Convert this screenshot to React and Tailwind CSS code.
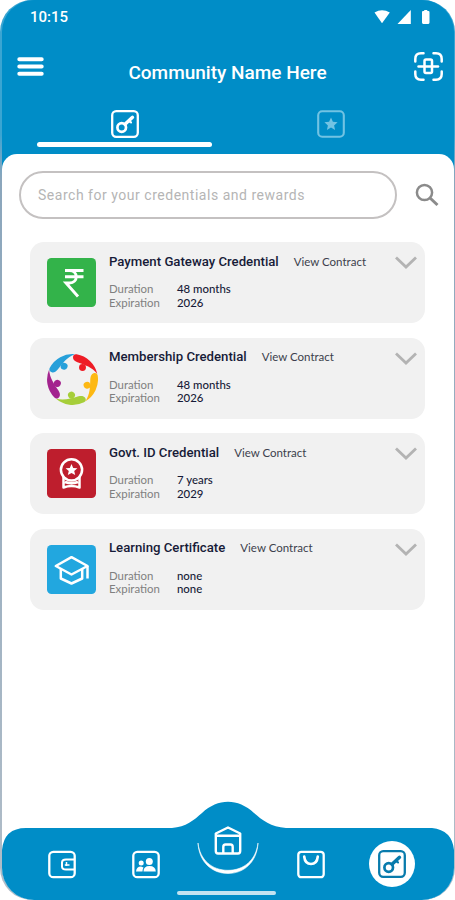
const credentials = [
  { title: 'Payment Gateway Credential', duration: '48 months', expiration: '2026', Icon: RupeeIcon },
  { title: 'Membership Credential', duration: '48 months', expiration: '2026', Icon: MembersIcon },
  { title: 'Govt. ID Credential', duration: '7 years', expiration: '2029', Icon: BadgeIcon },
  { title: 'Learning Certificate', duration: 'none', expiration: 'none', Icon: GraduationIcon },
];

function RupeeIcon() {
  return (
    <svg viewBox="0 0 49 49" className="w-[49px] h-[49px]">
      <rect width="49" height="49" rx="4.5" fill="#33b34a" />
      <path d="M18 12.500H36.500M18 18.700H36.500M18 12.500H22.500C31.500 12.500 31.500 25 22.500 25H19L31 38.500" fill="none" stroke="#fff" strokeWidth="2.9" />
    </svg>
  );
}

const memberColors = ['#ee1c25', '#fdb813', '#a6ce39', '#a3238e', '#27a0da'];

function MembersIcon() {
  return (
    <svg viewBox="0 0 50 50" className="w-[51px] h-[51px]">
      {memberColors.map((color, i) => (
        <g key={color} transform={`rotate(${i * 72} 25 25)`} fill={color}>
          <path d="M25.500 3.500C25.500 1 27 0 29 .3A25 25 0 0 1 49.300 19.500C44 13 37.500 11 29.800 8.200C27 7 25.500 5.500 25.500 3.500Z" />
          <circle cx="34.800" cy="13.200" r="3.400" />
        </g>
      ))}
    </svg>
  );
}

function BadgeIcon() {
  return (
    <svg viewBox="0 0 49 49" className="w-[49px] h-[49px]">
      <rect width="49" height="49" rx="4.5" fill="#be1e2d" />
      <g fill="none" stroke="#fff" strokeWidth="2.5" strokeLinejoin="round">
        <circle cx="24.500" cy="20.800" r="10.600" />
        <path d="M16.500 27.500V38.500Q24.500 35.500 32.500 38.500V27.500M18 33Q24.500 35.500 31 33" />
      </g>
      <path d="M24.500 15L26.200 18.900L30.400 19.200L27.200 22L28.200 26.100L24.500 23.900L20.800 26.100L21.800 22L18.600 19.200L22.800 18.900Z" fill="#fff" />
    </svg>
  );
}

function GraduationIcon() {
  return (
    <svg viewBox="0 0 49 49" className="w-[49px] h-[49px]">
      <rect width="49" height="49" rx="4.5" fill="#22a7df" />
      <g fill="none" stroke="#fff" strokeWidth="2.500" strokeLinejoin="round">
        <path d="M8.800 21L24.500 12.200L40.500 21L24.500 29.500Z" />
        <path d="M13.800 24V33.500L24.500 38.500L35.200 33.500V24M40.500 21V33.500" />
      </g>
    </svg>
  );
}

function KeyIcon() {
  return (
    <svg viewBox="0 0 28 28" className="w-7 h-7" fill="none" stroke="currentColor">
      <rect x="1.200" y="1.200" width="25.600" height="25.600" rx="4" strokeWidth="2.300" />
      <circle cx="10.700" cy="17.500" r="4.300" strokeWidth="2.700" />
      <path d="M14 14.300L21.500 7.300" strokeWidth="3.400" strokeLinecap="round" />
      <path d="M18 11L20 12.300" strokeWidth="2.200" strokeLinecap="round" />
    </svg>
  );
}

function StatusBar() {
  return (
    <div className="flex h-8 items-center justify-between pt-[2px] pl-[28px] pr-[24px]">
      <span className="text-[15px] leading-4 font-medium">10:15</span>
      <svg viewBox="0 0 56 14" className="w-14 h-[14px]" fill="#fff">
        <path d="M.5 2.500Q8-1.800 15.800 2.500L8 13.200Z" />
        <path d="M36.800 0V14H23.500Z" />
        <path d="M49 1H50.200V0H53.300V1H54.500Q55.500 1 55.500 2.200V12.600Q55.500 14 54.300 14H49.200Q48 14 48 12.600V2.200Q48 1 49 1Z" />
      </svg>
    </div>
  );
}

function Header() {
  return (
    <header className="flex h-[154px] flex-col text-white">
      <StatusBar />
      <div className="flex h-[70px] items-start justify-between pl-[15px] pr-[11px]">
        <svg viewBox="0 0 27 20" className="mt-[25px] w-[27px] h-5" stroke="#fff" strokeWidth="4" strokeLinecap="round">
          <path d="M2.300 2.300H24.700M2.300 9.500H24.700M2.300 16.700H24.700" />
        </svg>
        <h1 className="mt-[29px] mr-[3px] text-[19px] leading-6 font-medium whitespace-nowrap">Community Name Here</h1>
        <svg viewBox="0 0 29 29" className="mt-5 w-[29px] h-[29px]" fill="none" stroke="#fff" strokeWidth="2.500" strokeLinecap="round">
          <path d="M1.300 9.500V7Q1.300 1.300 7 1.300H9.500M19.500 1.300H22Q27.700 1.300 27.700 7V9.500M27.700 19.500V22Q27.700 27.700 22 27.700H19.500M9.500 27.700H7Q1.300 27.700 1.300 22V19.500" />
          <rect x="10.500" y="7.500" width="7.500" height="13.500" rx="1.500" />
          <path d="M4.500 14.500H24" />
        </svg>
      </div>
      <div className="flex gap-[31px] px-[35px] pt-2">
        <div className="flex w-[175px] flex-col items-center gap-[4px]">
          <KeyIcon />
          <div className="h-[5px] w-full rounded-full bg-white"></div>
        </div>
        <div className="flex w-[175px] justify-center text-[#72c3e3]">
          <svg viewBox="0 0 28 28" className="w-7 h-7">
            <rect x="1.200" y="1.200" width="25.600" height="25.600" rx="4" fill="none" stroke="currentColor" strokeWidth="2.100" />
            <path d="M14 7.500L15.900 11.800L20.600 12.300L17.100 15.400L18.100 20L14 17.600L9.900 20L10.900 15.400L7.400 12.300L12.100 11.800Z" fill="currentColor" />
          </svg>
        </div>
      </div>
    </header>
  );
}

function Search() {
  return (
    <div className="flex items-center gap-[18px] pt-[17px] pl-[17px]">
      <div className="flex h-[48px] w-[378px] items-center rounded-full border-2 border-[#c4c1c1] pl-[17px] text-[14px] tracking-[0.52px] whitespace-nowrap text-[#b5b5b5]">
        Search for your credentials and rewards
      </div>
      <svg viewBox="0 0 24 24" className="w-6 h-6" fill="none" stroke="#8b8b8b" strokeWidth="2.500">
        <circle cx="9.500" cy="9.500" r="7.600" />
        <path d="M15 15L22.500 22" strokeWidth="3" />
      </svg>
    </div>
  );
}

function CredentialCard({ title, duration, expiration, Icon }) {
  return (
    <li className="flex h-[81px] rounded-[14px] bg-[#f1f1f1] pr-[8px] pl-[17px]">
      <div className="flex w-[62px] shrink-0 pt-4">
        <Icon />
      </div>
      <div className="grow">
        <div className="flex h-[39px] items-center gap-[15px]">
          <h2 className="text-[13.2px] leading-5 font-medium whitespace-nowrap text-[#171b38]">{title}</h2>
          <a className="font-['Lato',sans-serif] text-[11.5px] leading-5 whitespace-nowrap text-[#3c3f4c]">View Contract</a>
        </div>
        <dl className="grid grid-cols-[68px_1fr] pt-[1px] font-['Lato',sans-serif] text-[11.4px] leading-[13.5px] text-[#808080]">
          <dt>Duration</dt>
          <dd className="font-medium text-[#171b38]">{duration}</dd>
          <dt>Expiration</dt>
          <dd className="font-medium text-[#171b38]">{expiration}</dd>
        </dl>
      </div>
      <svg viewBox="0 0 22 13" className="mt-[14px] h-[13px] w-[22px] shrink-0" fill="none" stroke="#b3b3b3" strokeWidth="2.800">
        <path d="M1 1.500L11 11L21 1.500" />
      </svg>
    </li>
  );
}

function BottomNav() {
  return (
    <nav className="relative flex h-[100px] shrink-0 text-white">
      <svg viewBox="0 0 452 100" className="absolute inset-0 h-full w-full">
        <path d="M0 100V50Q2 28 24 28H170C184 27 192 20 200 13C216-2 236-2 252 13C260 20 269 27 284 28H430Q450 30 452 50V100Z" fill="#008dc7" />
      </svg>
      <div className="relative grow">
        <div className="flex h-[90px] items-start pl-[46px]">
          <svg viewBox="0 0 28 28" className="mt-[50px] h-[29px] w-[28px]" fill="none" stroke="#fff" strokeWidth="2.300">
            <rect x="1.300" y="1.300" width="25.400" height="25.400" rx="4" />
            <path d="M26.500 9H18Q14 9 14 12V16Q14 19 18 19H26.500" strokeWidth="2" />
            <path d="M18.500 11.500V15.500M16.800 14.500H21.500" strokeWidth="1.500" />
          </svg>
          <svg viewBox="0 0 28 28" className="mt-[50px] ml-[56px] h-[29px] w-[28px]" fill="#fff">
            <rect x="1.300" y="1.300" width="25.400" height="25.400" rx="4" fill="none" stroke="#fff" strokeWidth="2.300" />
            <circle cx="9.200" cy="12.500" r="2.500" />
            <circle cx="17.300" cy="11" r="3.500" />
            <path d="M4 21Q4.500 16 9 16L11.500 17Q10.500 18.500 10.500 21ZM11.500 21Q11.500 15.500 17.500 15.500T23.800 21Z" />
          </svg>
          <svg viewBox="0 0 62 62" className="mt-[14px] ml-[37px] h-[62px] w-[62px]" fill="none" stroke="#fff" strokeWidth="2.400" strokeLinejoin="round">
            <path d="M1 29C2 48 15 59.500 31 59.500S60 48 61 29C59 46 47 56.300 31 56.300S3 46 1 29Z" fill="#fff" strokeWidth=".6" />
            <path d="M18.800 19.500L31 13.500L43.200 19.500V37Q43.200 39.500 41 39.500H21Q18.800 39.500 18.800 37V19.500ZM19 21.700H43M26.300 39.500V33Q26.300 30.500 28.500 30.500H33.500Q35.700 30.500 35.700 33V39.500" />
          </svg>
          <svg viewBox="0 0 28 28" className="mt-[50px] ml-[38px] h-[29px] w-[28px]" fill="none" stroke="#fff" strokeWidth="2.300">
            <rect x="1.300" y="1.300" width="25.400" height="25.400" rx="3" />
            <path d="M7.200 6Q8 13.500 14 13.500T20.800 6" strokeWidth="2.600" strokeLinecap="round" />
          </svg>
          <div className="mt-[41px] ml-[44px] flex h-[46px] w-[46px] items-center justify-center rounded-full bg-white text-[#087bac]">
            <KeyIcon />
          </div>
        </div>
        <div className="mt-px ml-[175px] h-1 w-[99px] rounded-full bg-[#c2e3f1]"></div>
      </div>
    </nav>
  );
}

export default function App() {
  return (
    <div className="h-[900px] w-[455px] overflow-hidden bg-white font-['Roboto',sans-serif]">
      <div className="flex h-full w-full rounded-[32px] bg-linear-to-b from-[#3aa5d2] from-15% via-[#8ba6bc] via-20% to-[#b1bdc8] pr-[1px] pl-[2px]">
        <div className="flex w-full flex-col overflow-hidden rounded-[32px] bg-[#008dc7]">
          <Header />
          <main className="flex grow flex-col justify-between rounded-t-[15px] bg-white">
            <div>
              <Search />
              <ul className="flex flex-col gap-[14.6px] pt-[23px] pr-[29px] pl-[28px]">
                {credentials.map((credential) => (
                  <CredentialCard key={credential.title} {...credential} />
                ))}
              </ul>
            </div>
            <BottomNav />
          </main>
        </div>
      </div>
    </div>
  );
}
